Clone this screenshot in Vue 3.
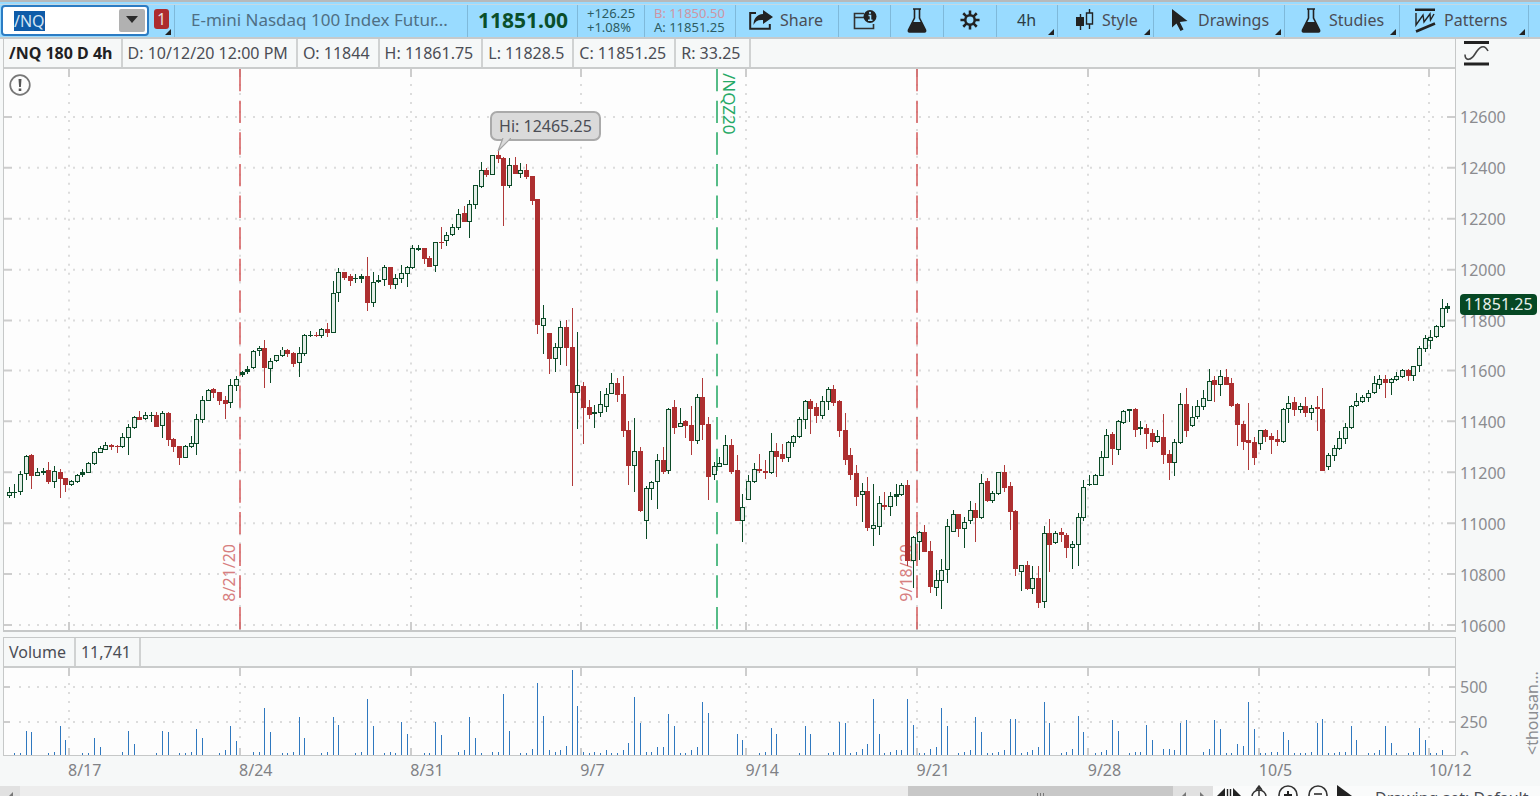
<script setup>
import { onMounted, ref } from 'vue'

const symbol = ref('/NQ')
const symbolBox = ref(null)
onMounted(() => {
  symbolBox.value.focus()
  symbolBox.value.select()
})

const readings = ['D: 10/12/20 12:00 PM', 'O: 11844', 'H: 11861.75', 'L: 11828.5', 'C: 11851.25', 'R: 33.25']
const prices = [12600, 12400, 12200, 12000, 11800, 11600, 11400, 11200, 11000, 10800, 10600]
const dates = ['8/17', '8/24', '8/31', '9/7', '9/14', '9/21', '9/28', '10/5', '10/12']

const gridX = [65, 236, 407, 577, 742, 913, 1084, 1255, 1425]
const gridY = [48, 99, 150, 201, 252, 302, 353, 404, 455, 506, 557]
const markers = [
  { x: 236, kind: 'expired' },
  { x: 713, kind: 'rolled' },
  { x: 913, kind: 'expired' }
]

// Candles: direction, high, body top, body bottom, low, in thirds of a plot unit from each group's base.
const groups = [
  [1020, `g 445 458 470 477,g 436 459 461 478,g 395 404 460 468,g 349 350 405 422,r 345 349 411 451,g 387 398 410 412,g 387 396 401 409,r 368 394 430 436,g 381 396 428 446,r 391 398 420 478,r 417 417 438 459,g 424 427 437 440,g 404 407 428 431,g 391 398 409 413,g 368 373 401 403,g 337 340 374 378,g 320 327 343 343,g 310 318 334 334,r 315 319 325 333,r 318 322 324 343,g 283 295 325 328,g 256 264 297 347,g 232 233 266 269,r 215 233 242 243,g 220 228 239 242,g 220 229 231 248,r 220 227 263 265,g 215 223 262 296,r 219 223 302 320,r 296 299 325 338,r 322 322 357 378,g 318 322 356 356,g 291 313 325 328,g 226 241 316 347,g 171 184 244 251,g 150 152 185 186,r 147 151 163 176,r 160 160 186 198,r 171 182 195 240,g 121 138 193 206,g 112 120 140 157`],
  [660, `g 456 458 469 475,g 442 449 460 466,g 392 395 446 449,g 378 385 397 410,r 359 385 447 508,g 418 427 451 491,g 407 409 425 428,g 382 389 410 413,r 387 390 406 414,r 400 403 434 445,g 382 403 433 473,g 341 345 405 412,g 332 345 347 350,r 337 345 347 350,g 323 327 347 355,r 310 327 339 351,g 184 219 338 340,g 143 156 220 247,r 155 155 173 179,r 162 167 182 197,g 163 174 176 190,g 163 168 176 188,r 111 168 248 273,g 157 187 248 261,g 166 180 187 188,g 134 142 181 198,r 142 142 195 206,g 163 174 194 206,g 135 160 178 189,g 139 142 163 202,g 76 84 144 147,g 76 84 90 92,r 83 83 118 131,r 107 114 141 142`],
  [300, `g 425 427 499 517,r 381 426 428 446,g 396 404 424 437,g 373 382 405 409,g 328 341 383 391,r 318 340 366 366,g 300 313 365 414,g 254 256 316 327,g 187 210 262 265,r 205 210 226 230,g 164 165 226 226,r 150 165 177 188,r 171 174 257 378,g 175 196 257 265,r 170 196 221 222,g 188 210 221 233,r 193 210 230 237,r 227 228 302 316,r 298 298 676 702,g 615 655 677 766,r 700 700 780 824,g 730 742 779 819,g 663 682 743 797,r 660 682 743 801`],
  [1020, `r -95 20 163 441,g -23 138 163 269,r 130 142 208 316,r 184 205 227 239,g 198 219 225 266,g 157 196 221 233,g 148 166 203 220,g 103 133 164 166,r 116 133 167 188,r 112 164 275 293,r 247 272 380 437,g 238 336 380 459,r 323 335 515 518,g 441 448 545 599,g 427 428 450 482,g 346 364 428 510,r 325 363 398 404,g 208 211 397 404,r 184 205 267 284,g 206 251 263 264,r 243 246 262 297,r 202 259 307 347,g 166 175 307 315,r 116 174 257 302,r 234 254 415 482,g 370 382 409 422,g 355 373 383 385,g 289 319 377 378,r 301 317 398 405,r 347 394 546 546,g 464 503 546 608,g 409 427 482 484,g 373 391 428 432,r 346 391 397 402,r 364 395 402 419,g 283 337 401 405,r 311 335 353 414,r 315 345 360 368,g 306 310 356 369,g 288 292 311 323,g 234 241 293 296,g 184 187 243 270`],
  [1110, `r 89 97 119 194,r 103 115 141 162,g 81 97 140 149,g 54 61 100 122,r 49 61 101 112,r 94 97 186 203,r 131 183 272 287,r 238 259 317 333,r 288 313 383 410,g 342 367 379 459,r 324 367 476 485,g 346 467 479 532,g 381 403 473 499,r 369 408 415 424,g 369 381 415 441,g 346 376 383 410,g 342 349 379 382,r 333 349 577 592,g 502 503 577 657,g 486 490 519 572,r 468 489 548 549,r 517 547 655 671,g 603 634 658 680,g 571 602 635 720,g 450 471 604 643,g 423 436 488 490,r 434 434 479 504,g 445 459 479 536,g 396 422 455 464,r 401 422 446 518,g 315 342 446 450,r 328 336 397 399,g 366 373 397 401,g 309 310 374 377,r 288 309 356 369,r 339 352 428 482,r 423 426 599 621`],
  [1080, `g 618 619 638 696,r 605 618 689 692,g 620 658 689 706,r 620 658 731 747,g 502 523 728 747,r 480 522 558 638,g 516 523 553 555,r 506 518 527 548,r 521 527 567 598,g 547 556 567 630,g 462 474 557 620,g 362 384 477 485,g 349 375 377 382,g 345 349 378 379,g 277 294 350 352,g 210 227 296 298,r 219 226 270 319,g 182 187 273 287,g 153 155 193 196,g 149 150 157 189,r 147 149 212 234,g 186 204 211 228,r 196 207 226 270,r 209 221 248 265,g 214 231 248 251,r 165 235 288 314,r 272 285 311 363,g 241 249 311 350,g 101 136 251 254,r 87 136 216 233,g 142 174 202 203,g 124 142 175 180,g 93 118 143 152,g 30 65 126 127,r 52 64 77 130,g 34 51 77 111,r 29 55 77 79,r 56 72 140 143,r 132 135 198 261,r 187 194 248 273`],
  [840, `r 373 484 491 572,r 473 488 537 558,g 452 454 496 514,r 450 452 475 490,r 463 470 484 526,r 454 480 488 500,g 388 391 488 491,g 350 373 391 432,r 355 368 394 410,g 373 381 393 401,r 355 380 403 414,g 378 386 403 423,r 350 385 391 456,r 328 389 575 577,g 522 529 564 572,g 499 508 532 545,g 455 478 509 513,g 432 444 479 495,g 378 381 446 450,g 341 367 382 385,g 347 354 370 371,g 333 341 356 369,g 292 313 343 346,g 289 300 317 329,r 287 299 311 356,g 296 301 311 347,g 279 291 303 306,g 270 273 293 297,r 271 272 290 306,g 260 261 290 306,g 197 205 262 279,g 166 174 208 220,g 151 170 182 208,g 135 138 172 175,g 57 85 140 144,g 70 79 87 98`]
]

const slot = (i) => Math.round(4.5 + i * 5.6875)

const candles = groups
  .flatMap(([base, rows]) => rows.split(',').map((row) => {
    const [dir, ...v] = row.split(' ')
    const [high, top, bottom, low] = v.map((n) => Math.round((Number(n) + base) / 3) - 69)
    return { up: dir === 'g', high, top, low: Math.max(low, bottom), height: Math.max(bottom - top, 1) }
  }))
  .map((c, i) => ({ ...c, x: slot(i) }))

const volumes = `0 2 2 24 23 0 0 2 3 29 15 0 0 2 2 17 8 0 0 0 3 24 11 0 0 0 2 24 23 0
2 2 3 26 17 0 0 2 5 29 14 0 0 3 3 48 23 0 2 2 3 38 17 0 0 2 3 38 30 0
0 2 3 57 29 0 2 3 2 33 21 0 0 2 2 33 20 0 0 3 5 38 17 2 0 3 3 62 24 0
2 2 6 73 39 5 3 5 9 86 50 3 2 3 2 5 2 2 5 12 59 32 3 3 8 8 41 29 2 2
5 8 54 42 0 0 0 0 21 15 0 0 2 3 27 21 0 0 0 2 29 21 0 0 2 3 33 32 2 3
6 11 57 21 2 3 5 5 57 30 2 2 6 8 48 29 0 2 3 5 38 23 2 2 3 5 36 36 2 3
5 8 54 32 0 2 3 6 39 23 0 2 3 5 35 24 0 2 3 3 30 15 0 6 6 5 32 35 0 0
3 6 35 26 2 2 11 9 54 26 2 2 3 3 23 15 2 2 2 3 32 36 2 2 3 3 29 15 0 2
2 5 29 12 2 0 2 3 27 15 2 2 5 0`
  .split(/\s+/)
  .map((h, i) => ({ x: slot(i), h: Number(h) }))
  .filter((bar) => bar.h > 0)
</script>

<template>
  <main class="app">
    <div class="strip"></div>
    <header class="toolbar">
      <div class="search">
        <input ref="symbolBox" v-model="symbol" aria-label="Symbol" spellcheck="false" />
        <button class="drop" aria-label="Recent symbols">
          <svg width="12" height="7" viewBox="0 0 12 7"><path d="M0 0h12L6 7z" fill="#2b2b2b" /></svg>
        </button>
      </div>
      <button class="cell link corner" aria-label="Link colour 1"><span class="badge">1</span></button>
      <div class="cell name">E-mini Nasdaq 100 Index Futur...</div>
      <div class="cell last">11851.00</div>
      <div class="cell pair change"><span>+126.25</span><span>+1.08%</span></div>
      <div class="cell pair quote"><span class="bid">B: 11850.50</span><span>A: 11851.25</span></div>
      <button class="cell share">
        <svg width="24" height="20" viewBox="0 0 24 20">
          <path d="M7 3H1.200v15.800h19.600V14" fill="none" stroke="#222" stroke-width="2" />
          <path d="M14 0l10 7-10 7v-4C9 9.500 6 11.500 4.500 15 4.500 8.500 8 4.500 14 4z" fill="#222" />
        </svg>Share
      </button>
      <button class="cell note" aria-label="Details">
        <svg width="24" height="20" viewBox="0 0 24 20">
          <path d="M11 3.500H1.500v15h19V14M1.500 7.500H11" fill="none" stroke="#333" stroke-width="1.600" />
          <circle cx="17" cy="6.500" r="6.500" fill="#222" />
          <path d="M15.500 5.500h2v4.500M15 10.300h4.500" fill="none" stroke="#9bdcff" stroke-width="1.600" />
          <circle cx="17" cy="2.800" r="1.100" fill="#9bdcff" />
        </svg>
      </button>
      <button class="cell lab" aria-label="Lab">
        <svg width="20" height="25" viewBox="0 0 20 25">
          <path d="M6 1h8M7.500 1v9L1.500 22q-.5 2 1 2h15q1.500 0 1-2L12.500 10V1" fill="none" stroke="#222" stroke-width="1.600" />
          <path d="M5.800 14h8.400l4.300 8q.5 2-1 2h-15q-1.500 0-1-2z" fill="#222" />
        </svg>
      </button>
      <button class="cell gear" aria-label="Settings">
        <svg width="20" height="22" viewBox="-11 -11 22 22">
          <g stroke="#222" stroke-width="2.800">
            <path d="M0-10.500V-5M0 10.500V5M-10.500 0H-5M10.500 0H5M-7.400-7.400l3.900 3.900M7.400 7.400L3.500 3.500M-7.400 7.400l3.900-3.900M7.400-7.400L3.500-3.500" />
            <circle r="5.200" fill="none" />
          </g>
        </svg>
      </button>
      <button class="cell period corner">4h</button>
      <button class="cell style corner">
        <svg width="18" height="22" viewBox="0 0 18 22">
          <path d="M4.500 5v16M13.500 0v20" stroke="#222" stroke-width="1.400" />
          <path d="M0 8h8v9H0z" fill="#222" />
          <path d="M10.500 4h6v11h-6z" fill="#99dbff" stroke="#222" stroke-width="1.400" />
        </svg>Style
      </button>
      <button class="cell drawings corner">
        <svg width="16" height="22" viewBox="0 0 16 22"><path d="M0 0v18.500l4.500-4 4 7.500 3-1.600L7.800 13 15.500 12z" fill="#222" /></svg>Drawings
      </button>
      <button class="cell studies corner">
        <svg width="20" height="25" viewBox="0 0 20 25">
          <path d="M6 1h8M7.500 1v9L1.500 22q-.5 2 1 2h15q1.500 0 1-2L12.500 10V1" fill="none" stroke="#222" stroke-width="1.600" />
          <path d="M5.800 14h8.400l4.300 8q.5 2-1 2h-15q-1.500 0-1-2z" fill="#222" />
        </svg>Studies
      </button>
      <button class="cell patterns corner">
        <svg width="21" height="25" viewBox="0 0 21 25">
          <path d="M0 1.800h20M1 23.500L20 15.500" stroke="#222" stroke-width="2.600" fill="none" />
          <path d="M1 5v12L8 7l1 7 6-8 .5 6L19 6" fill="none" stroke="#222" stroke-width="1.400" />
        </svg>Patterns
      </button>
    </header>

    <section class="workspace">
      <div class="panel price-panel">
        <div class="readings">
          <strong>/NQ 180 D 4h</strong>
          <span v-for="r in readings" :key="r">{{ r }}</span>
        </div>
        <div class="plot">
          <svg class="canvas" viewBox="0 0 1451 562" preserveAspectRatio="none">
            <g class="dots">
              <line v-for="y in gridY" :key="'h' + y" x1="15" :y1="y" x2="1443" :y2="y" />
              <line v-for="x in gridX" :key="'v' + x" :x1="x" y1="15" :x2="x" y2="552" />
            </g>
            <g class="ticks">
              <path v-for="y in gridY" :key="'t' + y" :d="`M0 ${y}h8M1443 ${y}h8`" />
              <path v-for="x in gridX" :key="'u' + x" :d="`M${x} 0v8M${x} 554v8`" />
            </g>
            <line v-for="m in markers" :key="m.x" class="marker" :class="m.kind" :x1="m.x" y1="0" :x2="m.x" y2="562" />
          </svg>
          <span class="mark rolled-label">/NQZ20</span>
          <span class="mark expiry first">8/21/20</span>
          <span class="mark expiry second">9/18/20</span>
          <svg class="canvas" viewBox="0 0 1451 562" preserveAspectRatio="none" shape-rendering="crispEdges">
            <g v-for="c in candles" :key="c.x" :class="c.up ? 'up' : 'down'">
              <rect class="wick" :x="c.x" :y="c.high" width="1" :height="c.low - c.high" />
              <rect class="body" :x="c.x - 2" :y="c.top" width="5" :height="c.height" />
              <rect v-if="c.up && c.height > 3" class="core" :x="c.x - 1" :y="c.top + 1" width="3" :height="c.height - 2" />
            </g>
          </svg>
          <div class="peak">
            Hi: 12465.25
            <svg width="14" height="14" viewBox="0 0 14 14"><path d="M6 0L1 13 14 0" fill="#dadada" stroke="#a4a4a4" stroke-width="1.200" /></svg>
          </div>
          <button class="alert" aria-label="Notice">
            <svg width="22" height="22" viewBox="0 0 22 22">
              <circle cx="11" cy="11" r="9.800" fill="none" stroke="#777" stroke-width="1.700" />
              <path d="M9.500 5h3l-.6 8h-1.800zM9.700 14.500h2.600V17H9.700z" fill="#555" />
            </svg>
          </button>
        </div>
      </div>
      <div class="price-axis">
        <svg class="fit" width="25" height="26" viewBox="0 0 25 26">
          <path d="M0 2.500h25M0 24h25" stroke="#222" stroke-width="2.800" />
          <path d="M1 14.500c0 7 6 6 10-.5s9-11 13-3" fill="none" stroke="#444" stroke-width="1.600" />
        </svg>
        <div class="scale">
          <span v-for="p in prices" :key="p">{{ p }}</span>
          <b class="current">11851.25</b>
        </div>
      </div>

      <div class="panel volume-panel">
        <div class="readings">
          <span>Volume</span><span>11,741</span>
        </div>
        <svg class="volume" viewBox="0 0 1451 88" preserveAspectRatio="none" shape-rendering="crispEdges">
          <g class="dots">
            <line x1="15" y1="19" x2="1443" y2="19" />
            <line x1="15" y1="55" x2="1443" y2="55" />
            <line v-for="x in gridX" :key="x" :x1="x" y1="15" :x2="x" y2="78" />
          </g>
          <g class="ticks">
            <path d="M0 19h6M1445 19h6M0 55h6M1445 55h6" />
            <path v-for="x in gridX" :key="x" :d="`M${x} 0v8M${x} 81v7`" />
          </g>
          <rect v-for="bar in volumes" :key="bar.x" class="bar" :x="bar.x" :y="88 - bar.h" width="1" :height="bar.h" />
        </svg>
      </div>
      <div class="volume-axis">
        <div class="volume-scale"><span>500</span><span>250</span><span>0</span></div>
        <span class="unit">&lt;thousan...</span>
      </div>
      <div class="dates"><span v-for="d in dates" :key="d">{{ d }}</span></div>
    </section>

    <footer class="bottom">
      <div class="scroll">
        <button aria-label="Scroll left"><svg width="6" height="12" viewBox="0 0 6 12"><path d="M6 0v12L0 6z" /></svg></button>
        <div class="track"><div class="thumb"><i></i><i></i><i></i></div></div>
        <button aria-label="Step left"><svg width="6" height="12" viewBox="0 0 6 12"><path d="M6 0v12L0 6z" /></svg></button>
        <button aria-label="Step right"><svg width="6" height="12" viewBox="0 0 6 12"><path d="M0 0v12l6-6z" /></svg></button>
      </div>
      <div class="tools">
        <button aria-label="Expand"><svg width="24" height="20" viewBox="0 0 24 20"><path d="M8 2v16L0 10zM16 2v16l8-8z" fill="#222" /><path d="M10.500 3v14M13.500 3v14" stroke="#222" stroke-width="1.400" /></svg></button>
        <button aria-label="Reset"><svg width="20" height="22" viewBox="0 0 20 22"><path d="M10 1v19M3 12a7 7 0 0 1 14 0M7 5l3-4 3 4" fill="none" stroke="#333" stroke-width="1.500" /></svg></button>
        <button aria-label="Zoom in"><svg width="22" height="24" viewBox="0 0 22 24"><circle cx="11" cy="11" r="9" fill="none" stroke="#333" stroke-width="1.600" /><path d="M7 11h8M11 7v8" stroke="#222" stroke-width="2" /></svg></button>
        <button aria-label="Zoom out"><svg width="22" height="24" viewBox="0 0 22 24"><circle cx="11" cy="11" r="9" fill="none" stroke="#333" stroke-width="1.600" /><path d="M7 10h8M7 13h8" stroke="#222" stroke-width="1.400" /></svg></button>
        <button aria-label="Pointer"><svg width="16" height="22" viewBox="0 0 16 22"><path d="M0 0v20l15-9z" fill="#222" /></svg></button>
      </div>
      <span class="set">Drawing set: Default</span>
    </footer>
  </main>
</template>

<style>
body { overflow: hidden; }
</style>

<style scoped>
* { box-sizing: border-box; }
.app {
  display: flex;
  flex-direction: column;
  height: 100vh;
  overflow: hidden;
  background: #f6f8f8;
  color: #4b4d55;
  font: 16px/20px "Noto Sans", "Open Sans", sans-serif;
}
button {
  padding: 0;
  border: 0;
  background: none;
  color: inherit;
  font: inherit;
}
.strip {
  flex: none;
  height: 5px;
  border-top: 2px solid #b7b9bb;
  border-bottom: 1px solid #c5d9e4;
  background: #99dbff;
}
.toolbar {
  display: flex;
  flex: none;
  height: 34px;
  padding-right: 11px;
  border-bottom: 2px solid #c6cacc;
  background: #99dbff;
}
.search {
  display: flex;
  width: 148px;
  height: 31px;
  margin-left: 1px;
  padding: 2px;
  border: 2px solid #2b7cc4;
  border-radius: 4px;
  background: #fff;
}
.search input {
  flex: 1;
  min-width: 0;
  padding: 0 0 0 9px;
  border: 0;
  outline: 0;
  background: none;
  color: #333;
  font: inherit;
}
.search input::selection { background: #0e5ba8; color: #d5e4f2; }
.drop {
  width: 26px;
  border-radius: 2px;
  background: #b1b1b1;
}
.drop svg { display: block; margin: 0 auto 3px; }
.cell {
  position: relative;
  display: flex;
  flex: none;
  align-items: center;
  padding-bottom: 2px;
  border-right: 1px solid #7fb9da;
  white-space: nowrap;
}
.corner::after {
  position: absolute;
  right: 3px;
  bottom: 2px;
  border-bottom: 6px solid #222;
  border-left: 6px solid transparent;
  content: "";
}
.link { width: 26px; padding-left: 5px; }
.badge {
  width: 15px;
  height: 20px;
  margin-bottom: 2px;
  border-radius: 3px;
  background: #ad2c2e;
  color: #e8dede;
  text-align: center;
}
.name { flex: 1; padding-left: 16px; color: #4f6f84; font-size: 17px; }
.last { width: 110px; padding-left: 10px; color: #0a4f2a; font-size: 21px; font-weight: 700; }
.pair {
  flex-direction: column;
  align-items: flex-start;
  justify-content: center;
  padding-left: 9px;
  color: #2c5c62;
  font-size: 13px;
  line-height: 14px;
}
.change { width: 67px; }
.quote { width: 91px; }
.bid { color: #cf95a4; }
.share { width: 103px; padding-left: 13px; gap: 7px; }
.note { width: 52px; justify-content: center; }
.lab, .gear { width: 53px; justify-content: center; }
.period { width: 61px; padding-left: 20px; color: #2c3b44; }
.style { width: 96px; padding-left: 18px; gap: 8px; }
.drawings { width: 131px; padding-left: 18px; gap: 10px; }
.studies { width: 115px; padding-left: 16px; gap: 8px; }
.patterns { width: 129px; padding-left: 15px; gap: 8px; }
.workspace {
  display: grid;
  flex: 1;
  grid-template: minmax(0, 1fr) 119px 30px / minmax(0, 1fr) 84px;
  min-height: 0;
}
.panel {
  display: flex;
  flex-direction: column;
  margin-left: 3px;
  border: solid #c6c8c8;
  border-width: 0 1px 1px;
}
.price-panel { margin-bottom: 5px; border-bottom-width: 2px; }
.volume-panel { border-top-width: 1px; }
.readings {
  display: flex;
  flex: none;
  height: 30px;
  border-bottom: 2px solid #cacccc;
  white-space: nowrap;
}
.readings > * { padding: 4px 8px 0 5px; border-right: 2px solid #d0d2d2; }
.readings strong { color: #1f2123; }
.plot {
  position: relative;
  flex: 1;
  min-height: 0;
  background: #fdfdfd;
}
.canvas {
  position: absolute;
  inset: 0;
  width: 100%;
  height: 100%;
}
.dots line { stroke: #dcdcdc; stroke-width: 2; stroke-dasharray: 2 7; }
.ticks path { stroke: #cdcdcd; stroke-width: 2; }
.marker { stroke-width: 1.500; stroke-dasharray: 22.400 9.300; }
.expired { stroke: #d4585a; }
.rolled { stroke: #1fa660; }
.up .wick, .up .body { fill: #0b4a27; }
.up .core { fill: #e4eee8; }
.down .wick { fill: #b03a3a; }
.down .body { fill: #ad2f30; }
.mark { position: absolute; writing-mode: vertical-rl; line-height: 20px; }
.rolled-label { top: 4px; left: 49.300%; color: #27a966; font-size: 17px; }
.expiry { bottom: 28px; color: #d77f80; transform: rotate(180deg); }
.first { left: 14.800%; }
.second { left: 61.500%; }
.peak {
  position: absolute;
  top: 42px;
  left: 33.500%;
  padding: 3px 7px;
  border: 2px solid #aaa;
  border-radius: 7px;
  background: #dadada;
  white-space: nowrap;
}
.peak svg { position: absolute; top: 25px; left: 5px; }
.alert { position: absolute; top: 5px; left: 5px; }
.alert svg { display: block; }
.price-axis {
  display: flex;
  flex-direction: column;
  margin-bottom: 6px;
  color: #8b8c90;
}
.fit { flex: none; margin: 1px 0 3px 8px; }
.scale {
  position: relative;
  display: flex;
  flex: 1;
  flex-direction: column;
  justify-content: space-between;
  padding: 43px 0 0 4px;
  line-height: 10px;
}
.current {
  position: absolute;
  top: 40%;
  left: 4px;
  width: 77px;
  border-radius: 4px;
  background: #064824;
  color: #e9f1ec;
  font-weight: 400;
  line-height: 21px;
  text-align: center;
}
.volume {
  display: block;
  flex: 1;
  width: 100%;
  min-height: 0;
  background: #fdfdfd;
}
.bar { fill: #2f78bf; }
.volume-axis {
  display: flex;
  justify-content: space-between;
  height: 118px;
  padding-top: 30px;
  overflow: hidden;
  color: #8b8c90;
}
.volume-scale {
  display: flex;
  flex-direction: column;
  gap: 23px;
  padding: 14px 0 0 4px;
  line-height: 12px;
}
.unit {
  height: 88px;
  margin-right: -3px;
  line-height: 22px;
  writing-mode: vertical-rl;
  transform: rotate(180deg);
  white-space: nowrap;
}
.dates {
  display: grid;
  grid-template-columns: 171fr 171fr 170fr 165fr 171fr 171fr 171fr 170fr 27fr;
  padding: 4px 0 0 68px;
  color: #808185;
  white-space: nowrap;
}
.dates span { min-width: 0; }
.bottom {
  display: flex;
  flex: none;
  align-items: center;
  height: 24px;
  margin-bottom: -14px;
  background: #fafbfb;
}
.scroll { display: flex; flex: 1; height: 24px; background: #ededed; }
.scroll button { width: 20px; background: #e1e1e1; }
.scroll svg { fill: #777; }
.track { flex: 1; }
.thumb {
  display: flex;
  justify-content: center;
  gap: 2px;
  width: 265px;
  height: 24px;
  margin-left: auto;
  padding-top: 7px;
  background: #c8c8c8;
}
.thumb i { width: 1px; height: 10px; background: #777; }
.tools { display: flex; align-items: center; gap: 8px; margin: 0 22px 5px 4px; }
.tools svg { display: block; }
.set { width: 165px; white-space: nowrap; }
</style>
